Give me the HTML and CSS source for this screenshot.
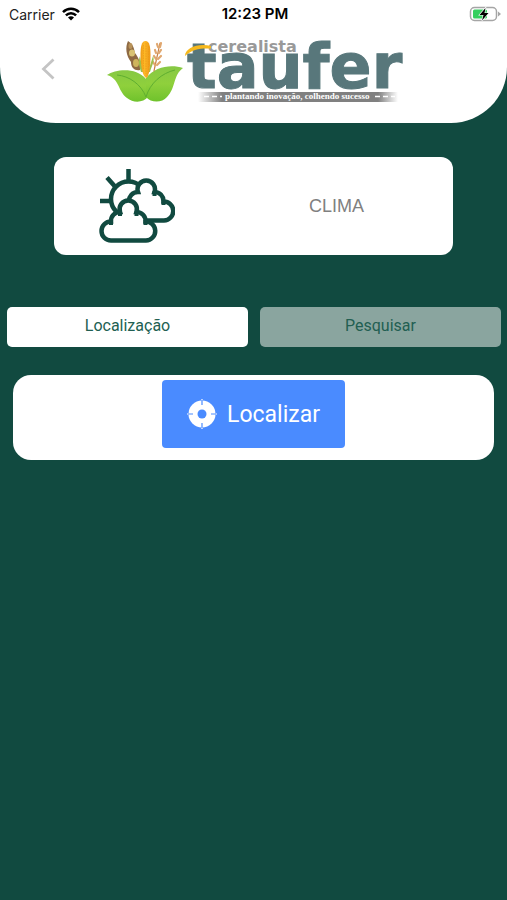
FILE: index.html
```html
<!DOCTYPE html>
<html lang="pt-BR">
<head>
  <meta charset="UTF-8">
  <meta name="viewport" content="width=device-width, initial-scale=1.0">
  <title>Cerealista Taufer | Clima</title>
  <link rel="stylesheet" href="styles.css">
</head>
<body>

  <header class="header">
    <div class="status-bar">
      <div class="carrier">
        <span>Carrier</span>
        <svg class="wifi" viewBox="0 0 18 14" aria-hidden="true">
          <g fill="none" stroke="#000" stroke-width="2.5">
            <path d="M1 5.2C5.5 .7 12.5 .7 17 5.2"/>
            <path d="M3.9 8.3c2.9-2.9 7.3-2.9 10.2 0"/>
          </g>
          <path d="M9 13.5l-3-3c1.7-1.6 4.3-1.6 6 0z"/>
        </svg>
      </div>
      <time class="clock">12:23 PM</time>
      <svg class="battery" viewBox="0 0 32 16" aria-hidden="true">
        <rect x="1.500" y="1.500" width="26" height="13" rx="4" fill="#fff" stroke="#a5a5a5" stroke-width="1.5"/>
        <path d="M29 5.500l3 2.500-3 2.500z" fill="#a5a5a5"/>
        <rect x="4" y="3.500" width="14" height="9" rx="1.5" fill="#35cf5e"/>
        <path d="M16.500 2l-6 7h4l-1.500 5.500 6.500-7.500h-4z" fill="#000" stroke="#fff" stroke-width="1.2" paint-order="stroke"/>
      </svg>
    </div>

    <div class="nav">
      <button class="back" type="button" aria-label="Voltar">
        <svg viewBox="0 0 14 22" aria-hidden="true">
          <path d="M12.500 1.500L2.500 11l10 9.500" fill="none" stroke="#c4c4c4" stroke-width="2.8"/>
        </svg>
      </button>

      <svg class="logo" viewBox="0 0 300 66" role="img" aria-label="Cerealista Taufer">
        <defs>
          <linearGradient id="strip">
            <stop offset="0" stop-color="#808080" stop-opacity="0"/>
            <stop offset=".12" stop-color="#808080"/>
            <stop offset=".9" stop-color="#808080"/>
            <stop offset="1" stop-color="#808080" stop-opacity="0"/>
          </linearGradient>
          <linearGradient id="leaf" x1="0" y1="0" x2="0" y2="1">
            <stop offset="0" stop-color="#86c844"/>
            <stop offset=".5" stop-color="#8fd03c"/>
            <stop offset="1" stop-color="#6fc22c"/>
          </linearGradient>
          <linearGradient id="corn">
            <stop offset="0" stop-color="#ee9a14"/>
            <stop offset=".4" stop-color="#fdb827"/>
            <stop offset="1" stop-color="#ee9614"/>
          </linearGradient>
        </defs>
        <!-- leaves -->
        <path d="M1 37c9-6 29-8 39 4l2 18c-5 6-15 6-21 1C11 52 14 41 1 37z" fill="url(#leaf)"/>
        <path d="M77 30c-11-4-28-2-37 10v19c5 6 16 6 21 0 9-9 6-22 16-29z" fill="url(#leaf)"/>
        <path d="M11 37c12 1 24 9 29 22M69 32c-13 3-25 13-29 27" fill="none" stroke="#5fae30" stroke-width="1"/>
        <!-- soy pod -->
        <path d="M22 3c5 3 6 7 7 12 3 4 6 9 5 17-5 1-9-2-9-8-5-6-6-15-3-21z" fill="#8f6a43"/>
        <ellipse cx="24.500" cy="8" rx="2" ry="3" fill="#b9935a"/>
        <ellipse cx="26" cy="15" rx="3" ry="3.500" fill="#d9c373"/>
        <ellipse cx="30" cy="25" rx="3" ry="4" fill="#cfb45c"/>
        <!-- wheat -->
        <g fill="none" stroke="#e0a76f" stroke-width="2.2" stroke-linecap="round">
          <path d="M48 33c2-10 4-18 6-28" stroke="#c98145" stroke-width="1.2"/>
          <path d="M52 9l-1-3M54 9l1-4M50 15l-1-3M53 15l2-3M50 21l-2-3M52 21l3-3M49 27l-2-3M51 27l3-3"/>
        </g>
        <!-- corn -->
        <path d="M35 34c-2-7-3-11-1-16l3 16zM44 34c2-7 5-11 3-16l-5 16z" fill="#9cc04c"/>
        <path d="M39.500 3c4 0 5 6 5 14 0 9-1 21-4 23-4-1-6-13-6-23 0-8 1-14 5-14z" fill="url(#corn)"/>
        <path d="M37.500 7v25M40 5v31M42.500 8v24" stroke="#e79818" stroke-width=".6" stroke-dasharray="1.5 1" fill="none"/>
        <!-- name -->
        <text class="logo-name" x="81" y="50">taufer</text>
        <text class="logo-kind" x="102" y="14">cerealista</text>
        <path d="M79 18c0-8 13-13 26-10v2.500C95 10 86 11 79 18z" fill="#f6b81c"/>
        <!-- slogan -->
        <rect x="92" y="54" width="200" height="10" fill="url(#strip)"/>
        <path d="M98 58.500h18M269 58.500h20" stroke="#fff" stroke-width="1.5" stroke-dasharray="5 3" fill="none"/>
        <text class="logo-slogan" x="119" y="61">plantando inovação, colhendo sucesso</text>
      </svg>
    </div>
  </header>

  <main class="content">
    <section class="weather-card">
      <svg class="weather-icon" viewBox="0 0 76 76" aria-hidden="true">
        <g fill="#fff" stroke="#114a40" stroke-width="4.5">
          <path d="M29.500 1v11M8 9.500l8 9M1 33h11" fill="none"/>
          <circle cx="29.500" cy="31" r="17.500"/>
          <path d="M30 52.500H65A9.500 9.500 0 0 0 64.500 33.500A9 9 0 0 0 55.500 24A8.700 8.700 0 1 0 39 24A9 9 0 0 0 30 34z"/>
          <path d="M55.500 23v5M64.500 32v5" fill="none" stroke-width="4"/>
          <path d="M12 72.500H47A9.500 9.500 0 0 0 46.500 53.500A9 9 0 0 0 37.500 44A8.700 8.700 0 1 0 21 44A9 9 0 0 0 12 53.500A9.500 9.500 0 0 0 12 72.500z"/>
          <path d="M21 43v5M37.500 43v5M12 52v5M46.500 52v5" fill="none" stroke-width="4"/>
        </g>
      </svg>
      <h1 class="weather-title">CLIMA</h1>
    </section>

    <nav class="tabs">
      <button class="tab tab-active" type="button">Localização</button>
      <button class="tab" type="button">Pesquisar</button>
    </nav>

    <section class="locate-card">
      <button class="locate" type="button">
        <svg viewBox="0 0 30 30" aria-hidden="true">
          <path d="M15 0v30M0 15h30" stroke="#fff" stroke-width="1.2"/>
          <circle cx="15" cy="15" r="13.500" fill="#fff"/>
          <circle cx="15" cy="15" r="4.500" fill="#4a8bff"/>
          <path d="M15 1v5M15 24v5M1 15h5M24 15h5" stroke="#4a8bff" stroke-width="1.2"/>
        </svg>
        Localizar
      </button>
    </section>
  </main>

</body>
</html>
```
FILE: styles.css
```css
* {
  box-sizing: border-box;
}
body {
  font-family: Roboto, sans-serif;
  margin: 0;
  min-height: 100vh;
  background-color: #114a40;
}
button {
  border: none;
  font-family: inherit;
  cursor: pointer;
}
svg {
  display: block;
}
.header {
  background: #fff;
  border-radius: 0 0 56px 56px;
  padding-bottom: 19px;
}
.status-bar {
  display: grid;
  grid-template-columns: 1fr auto 1fr;
  align-items: center;
  height: 28px;
  padding: 0 6px 0 9px;
  font-family: Inter, sans-serif;
  font-size: 14px;
  color: #222;
}
.carrier {
  display: flex;
  align-items: center;
  gap: 7px;
}
.wifi {
  width: 18px;
  height: 14px;
}
.clock {
  font-size: 15px;
  font-weight: 600;
  line-height: 18px;
  color: #000;
}
.battery {
  width: 32px;
  height: 16px;
  justify-self: end;
}
.nav {
  display: flex;
  align-items: center;
  gap: 42px;
  padding: 10px 32px 0;
}
.back {
  padding: 5px 9px 9px;
  background: none;
}
.back svg {
  width: 14px;
  height: 22px;
}
.logo {
  width: 300px;
  height: 66px;
}
.logo-name {
  font: bold 62px "DejaVu Sans", sans-serif;
  fill: #58777b;
  stroke: #58777b;
  stroke-width: 1px;
}
.logo-kind {
  font: bold 16px "DejaVu Sans", sans-serif;
  fill: #999;
}
.logo-slogan {
  font: bold 9px "Liberation Serif", serif;
  fill: #fff;
}
.weather-card {
  display: grid;
  grid-template-columns: 5fr 7fr;
  align-items: center;
  justify-items: center;
  margin: 34px 54px 52px;
  padding: 11px 0;
  background: #fff;
  border-radius: 12px;
}
.weather-icon {
  width: 76px;
  height: 76px;
}
.weather-title {
  margin: 0;
  font: 18px "Liberation Sans", sans-serif;
  color: #808080;
}
.tabs {
  display: grid;
  grid-template-columns: 1fr 1fr;
  gap: 12px;
  margin: 0 6px 28px 7px;
}
.tab {
  height: 40px;
  padding: 0 0 4px;
  border-radius: 5px;
  background: #8aa59f;
  color: #225f52;
  font-size: 16px;
}
.tab-active {
  background: #fff;
}
.locate-card {
  display: flex;
  justify-content: center;
  margin: 0 13px;
  padding: 5px 0 12px;
  background: #fff;
  border-radius: 18px;
}
.locate {
  display: flex;
  align-items: center;
  gap: 10px;
  height: 68px;
  padding: 0 25px;
  border-radius: 4px;
  background: #4a8bff;
  color: #fff;
  font-size: 23px;
}
.locate svg {
  width: 30px;
  height: 30px;
}
```
